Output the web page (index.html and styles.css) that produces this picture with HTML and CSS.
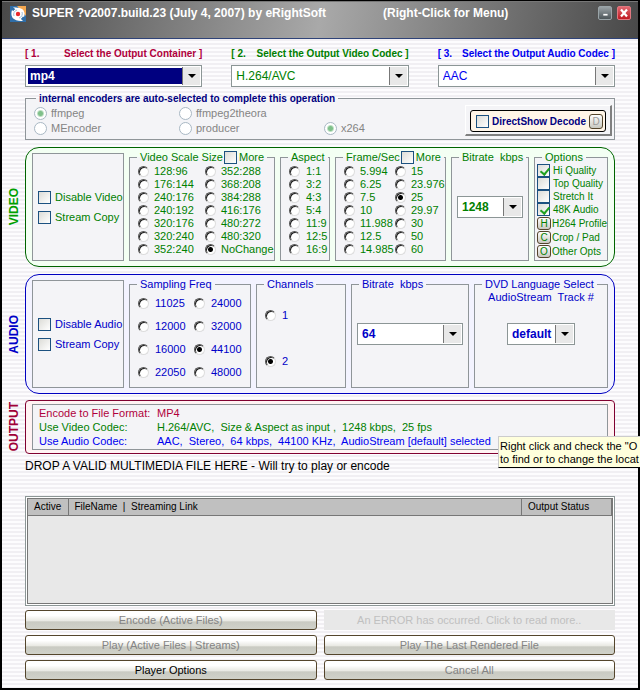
FILE: index.html
```html
<!DOCTYPE html>
<html lang="en">
<head>
<meta charset="utf-8">
<title>SUPER</title>
<link rel="stylesheet" href="styles.css">
</head>
<body>
<div class="window">
  <header class="titlebar">
    <svg class="logo" viewBox="0 0 16 16" aria-hidden="true">
      <rect width="16" height="16" fill="#2f6ea8"/>
      <path d="M7 0h9v10z" fill="#f5a850"/>
      <path d="M3 1C5 2 9 1 12 3c3 2 3 6 2 8l-2-1M13 15c-3 0-6 0-9-2-3-2-3-6-2-9l2 2" fill="#fff"/>
      <circle cx="8" cy="8" r="5.500" fill="#fff"/>
      <path d="M4 10a4.500 4.500 0 0 1 3-6M12 6a4.500 4.500 0 0 1-3 6" fill="none" stroke="#9dbdd8" stroke-width="1"/>
      <circle cx="8" cy="8" r="2.200" fill="#e8292c"/>
    </svg>
    <h1>SUPER ?v2007.build.23 (July 4, 2007) by eRightSoft</h1>
    <span class="hint">(Right-Click for Menu)</span>
    <div class="winbuttons">
      <button class="min" type="button" aria-label="Minimize"><svg viewBox="0 0 14 14"><path d="M5 8h5v2H5z" fill="#fff"/></svg></button>
      <button class="close" type="button" aria-label="Close"><svg viewBox="0 0 14 14"><path d="M3.500 3l7 8M10.500 3l-7 8" stroke="#fff" stroke-width="2.600"/></svg></button>
    </div>
  </header>

  <main>
    <div class="selectors">
      <div class="selector red">
        <label for="container"><span>[ 1.</span><span>Select the Output Container ]</span></label>
        <span class="combo active"><select id="container"><option>mp4</option></select></span>
      </div>
      <div class="selector green">
        <label for="vcodec"><span>[ 2.</span><span>Select the Output Video Codec ]</span></label>
        <span class="combo"><select id="vcodec"><option>H.264/AVC</option></select></span>
      </div>
      <div class="selector blue">
        <label for="acodec"><span>[ 3.</span><span>Select the Output Audio Codec ]</span></label>
        <span class="combo"><select id="acodec"><option>AAC</option></select></span>
      </div>
    </div>

    <fieldset class="panel encoders">
      <legend>internal encoders are auto-selected to complete this operation</legend>
      <div class="encoder-row">
        <div class="encoder-grid">
          <label><input type="radio" name="e1" checked disabled>ffmpeg</label>
          <label><input type="radio" name="e1" disabled>ffmpeg2theora</label>
          <span></span>
          <label><input type="radio" name="e2" disabled>MEncoder</label>
          <label><input type="radio" name="e2" disabled>producer</label>
          <label><input type="radio" name="e2" checked disabled>x264</label>
        </div>
        <div class="directshow">
          <div class="directshow-inner">
            <label><input type="checkbox">DirectShow Decode</label>
            <button class="mini dim" type="button">D</button>
          </div>
        </div>
      </div>
    </fieldset>

    <section class="group video">
      <h2>VIDEO</h2>
      <div class="box">
        <div class="panel plain toggles">
          <label><input type="checkbox">Disable Video</label>
          <label><input type="checkbox">Stream Copy</label>
        </div>
        <fieldset class="panel">
          <legend>Video Scale Size <label><input type="checkbox">More</label></legend>
          <div class="radios scale">
            <label><input type="radio" name="s">128:96</label>
            <label><input type="radio" name="s">176:144</label>
            <label><input type="radio" name="s">240:176</label>
            <label><input type="radio" name="s">240:192</label>
            <label><input type="radio" name="s">320:176</label>
            <label><input type="radio" name="s">320:240</label>
            <label><input type="radio" name="s">352:240</label>
            <label><input type="radio" name="s">352:288</label>
            <label><input type="radio" name="s">368:208</label>
            <label><input type="radio" name="s">384:288</label>
            <label><input type="radio" name="s">416:176</label>
            <label><input type="radio" name="s">480:272</label>
            <label><input type="radio" name="s">480:320</label>
            <label><input type="radio" name="s" checked>NoChange</label>
          </div>
        </fieldset>
        <fieldset class="panel">
          <legend>Aspect</legend>
          <div class="radios">
            <label><input type="radio" name="a">1:1</label>
            <label><input type="radio" name="a">3:2</label>
            <label><input type="radio" name="a">4:3</label>
            <label><input type="radio" name="a">5:4</label>
            <label><input type="radio" name="a">11:9</label>
            <label><input type="radio" name="a">12:5</label>
            <label><input type="radio" name="a">16:9</label>
          </div>
        </fieldset>
        <fieldset class="panel">
          <legend>Frame/Sec <label><input type="checkbox">More</label></legend>
          <div class="radios frames">
            <label><input type="radio" name="f">5.994</label>
            <label><input type="radio" name="f">6.25</label>
            <label><input type="radio" name="f">7.5</label>
            <label><input type="radio" name="f">10</label>
            <label><input type="radio" name="f">11.988</label>
            <label><input type="radio" name="f">12.5</label>
            <label><input type="radio" name="f">14.985</label>
            <label><input type="radio" name="f">15</label>
            <label><input type="radio" name="f">23.976</label>
            <label><input type="radio" name="f" checked>25</label>
            <label><input type="radio" name="f">29.97</label>
            <label><input type="radio" name="f">30</label>
            <label><input type="radio" name="f">50</label>
            <label><input type="radio" name="f">60</label>
          </div>
        </fieldset>
        <fieldset class="panel rate">
          <legend>Bitrate&nbsp; kbps</legend>
          <span class="combo bold"><select aria-label="Video bitrate"><option>1248</option></select></span>
        </fieldset>
        <fieldset class="panel options">
          <legend>Options</legend>
          <label><input type="checkbox" checked>Hi Quality</label>
          <label><input type="checkbox">Top Quality</label>
          <label><input type="checkbox">Stretch It</label>
          <label><input type="checkbox" checked>48K Audio</label>
          <div class="opt"><button class="mini" type="button" aria-labelledby="oh">H</button><span id="oh">H264 Profile</span></div>
          <div class="opt"><button class="mini" type="button" aria-labelledby="oc">C</button><span id="oc">Crop / Pad</span></div>
          <div class="opt"><button class="mini" type="button" aria-labelledby="oo">O</button><span id="oo">Other Opts</span></div>
        </fieldset>
      </div>
    </section>

    <section class="group audio">
      <h2>AUDIO</h2>
      <div class="box">
        <div class="panel plain toggles">
          <label><input type="checkbox">Disable Audio</label>
          <label><input type="checkbox">Stream Copy</label>
        </div>
        <fieldset class="panel">
          <legend>Sampling Freq</legend>
          <div class="radios freq">
            <label><input type="radio" name="q">11025</label>
            <label><input type="radio" name="q">12000</label>
            <label><input type="radio" name="q">16000</label>
            <label><input type="radio" name="q">22050</label>
            <label><input type="radio" name="q">24000</label>
            <label><input type="radio" name="q">32000</label>
            <label><input type="radio" name="q" checked>44100</label>
            <label><input type="radio" name="q">48000</label>
          </div>
        </fieldset>
        <fieldset class="panel">
          <legend>Channels</legend>
          <div class="radios channels">
            <label><input type="radio" name="c">1</label>
            <label><input type="radio" name="c" checked>2</label>
          </div>
        </fieldset>
        <fieldset class="panel rate">
          <legend>Bitrate&nbsp; kbps</legend>
          <span class="combo bold"><select aria-label="Audio bitrate"><option>64</option></select></span>
        </fieldset>
        <fieldset class="panel language">
          <legend>DVD Language Select</legend>
          <label for="track">AudioStream&nbsp; Track #</label>
          <span class="combo bold"><select id="track"><option>default</option></select></span>
        </fieldset>
      </div>
    </section>

    <section class="group output">
      <h2>OUTPUT</h2>
      <div class="box">
        <dl class="panel plain">
          <dt class="red">Encode to File Format:</dt><dd class="red">MP4</dd>
          <dt class="green">Use Video Codec:</dt><dd class="green">H.264/AVC,&nbsp; Size &amp; Aspect as input ,&nbsp; 1248 kbps,&nbsp; 25 fps</dd>
          <dt class="blue">Use Audio Codec:</dt><dd class="blue">AAC,&nbsp; Stereo,&nbsp; 64 kbps,&nbsp; 44100 KHz,&nbsp; AudioStream [default] selected</dd>
        </dl>
      </div>
      <div class="tooltip" role="tooltip">Right click and check the "O<br>to find or to change the locat</div>
    </section>

    <p class="drop">DROP A VALID MULTIMEDIA FILE HERE - Will try to play or encode</p>

    <div class="list">
      <table>
        <thead><tr><th class="c-active">Active</th><th>FileName&nbsp; |&nbsp; Streaming Link</th><th class="c-status">Output Status</th></tr></thead>
      </table>
    </div>

    <div class="actions">
      <button type="button" disabled>Encode (Active Files)</button>
      <button class="error" type="button" disabled>An ERROR has occurred. Click to read more..</button>
      <button type="button" disabled>Play (Active Files | Streams)</button>
      <button type="button" disabled>Play The Last Rendered File</button>
      <button type="button">Player Options</button>
      <button type="button" disabled>Cancel All</button>
    </div>
  </main>
</div>
</body>
</html>
```

FILE: styles.css
```css
* { box-sizing: border-box; }

body {
  margin: 0;
  overflow-x: hidden;
  background: #000;
  font: 11px/13px "Liberation Sans", Arial, sans-serif;
  color: #000;
}

h1, h2, p, dl, dd, fieldset { margin: 0; }
button, select, input { font: inherit; color: inherit; margin: 0; padding: 0; }
label { white-space: nowrap; }

.red { color: #b0003c; }
.green { color: #008000; }
.blue { color: #0000f0; }

.window {
  min-height: 100vh;
  display: flex;
  flex-direction: column;
  border: 2px solid #000;
  border-top-width: 1px;
  background: #fbf9fc repeating-linear-gradient(#fdfcfe 0 2px, #f1eff3 2px 4px);
}

/* Title bar */
.titlebar {
  height: 38px;
  display: flex;
  align-items: flex-start;
  padding: 4px 7px 0 8px;
  border-top: 1px solid #777;
  border-bottom: 1px solid #2f4378;
  background: linear-gradient(100deg, #484848, #a9a9a9 50%, #484848);
  color: #fff;
  font-size: 12px;
  font-weight: bold;
  line-height: 14px;
  white-space: nowrap;
}
.logo { width: 16px; height: 16px; margin-right: 6px; }
.titlebar h1 { font-size: 12px; flex: 0 0 351px; }
.winbuttons { display: flex; gap: 5px; margin-left: auto; }
.winbuttons button {
  width: 14px;
  height: 14px;
  border: 1px solid #9aa4a8;
  border-radius: 2px;
  background: linear-gradient(#9aa2a6, #4d565a);
}
.winbuttons .close { background: linear-gradient(#e06870, #c01820); border-color: #e07880; }
.winbuttons svg { display: block; width: 12px; height: 12px; }

main {
  flex: 1;
  display: flex;
  flex-direction: column;
  padding: 8px 23px 8px 23px;
}

/* Combo boxes */
.combo {
  position: relative;
  display: block;
  height: 22px;
  padding: 2px 18px 2px 2px;
  border: 1px solid #8c9696;
  background: #fff;
}
.combo select {
  appearance: none;
  display: block;
  width: 100%;
  height: 16px;
  border: 0;
  border-radius: 0;
  padding: 0 2px;
  background: #fff;
  font-size: 12px;
  line-height: 16px;
}
.combo::before {
  content: "";
  position: absolute;
  inset: 1px 1px 1px auto;
  width: 17px;
  border-left: 1px solid #777;
  background: #e8e8e8;
}
.combo::after {
  content: "";
  position: absolute;
  top: 8px;
  right: 5px;
  border: 4px solid transparent;
  border-top-color: #000;
  border-bottom-width: 0;
}
.combo.active select { background: #000080; color: #fff; font-weight: bold; }
.combo.bold select { font-size: 12px; font-weight: bold; }

.selectors { display: grid; grid-template-columns: repeat(3, 1fr); gap: 29px; }
.selector > label {
  display: flex;
  justify-content: space-between;
  margin-bottom: 5px;
  font-size: 10px;
  font-weight: bold;
}

/* Check boxes and radios */
input[type="checkbox"] {
  appearance: none;
  flex: none;
  width: 13px;
  height: 13px;
  border: 1px solid #1c5180;
  background: linear-gradient(135deg, #dcdcd7, #fff);
}
input[type="checkbox"]:checked::before {
  content: "";
  display: block;
  width: 4px;
  height: 7px;
  margin: 1px 0 0 4px;
  border: solid #21a121;
  border-width: 0 2px 2px 0;
  transform: rotate(40deg);
}
input[type="radio"] {
  appearance: none;
  flex: none;
  width: 11px;
  height: 11px;
  border: 1px solid;
  border-color: #555 #ddd #ddd #555;
  border-radius: 50%;
  background: #fff;
  box-shadow: inset 1px 1px 0 #222;
}
input[type="radio"]:checked { background: radial-gradient(circle, #000 2px, #fff 3px); }
input[type="radio"]:disabled {
  width: 13px;
  height: 13px;
  border-color: #a9b8c4;
  box-shadow: none;
}
input[type="radio"]:disabled:checked { background: radial-gradient(circle, #7fc08a 2px, #fff 4px); }

/* Panels */
.panel {
  min-width: 0;
  padding: 0;
  border: 1px solid #8f9599;
  background: #f4f4f7;
}
.panel > legend { margin-left: 7px; padding: 0 3px; white-space: nowrap; }
.panel > legend label { display: inline-flex; gap: 2px; height: 13px; margin-left: -2px; vertical-align: top; }

.encoders { margin-top: 5px; color: #848484; }
.encoders > legend { margin-left: 10px; color: #000080; font-size: 10px; font-weight: bold; }
.encoder-row { display: flex; justify-content: space-between; height: 34px; padding: 0 2px 0 8px; }
.encoder-grid { display: grid; grid-template-columns: 145px 145px auto; grid-template-rows: 15px 15px; padding-top: 1px; }
.encoder-grid label { display: flex; align-items: center; gap: 4px; }
.directshow {
  height: 31px;
  padding: 4px;
  border: 1px solid #fff;
  border-right: 2px solid #808080;
  border-bottom: 2px solid #808080;
}
.directshow-inner {
  display: flex;
  align-items: center;
  height: 22px;
  gap: 3px;
  padding: 0 2px 0 5px;
  border: 1px solid #000;
  border-radius: 3px;
  background: #fff5e8;
}
.directshow label { display: flex; align-items: center; gap: 3px; color: #000080; font-size: 10px; font-weight: bold; }

.mini {
  flex: none;
  width: 14px;
  height: 13px;
  border: 1px solid #54452c;
  border-radius: 3px;
  background: linear-gradient(#fff, #c8c8c0);
  font-size: 10px;
  line-height: 11px;
}
.mini.dim { height: 15px; color: #999; }

/* Grouped sections with a vertical caption */
.group { position: relative; display: grid; grid-template-columns: 23px minmax(0, 1fr); margin: 7px 0 0 -23px; }
.group h2 {
  justify-self: center;
  align-self: center;
  writing-mode: vertical-rl;
  transform: rotate(180deg);
  font-size: 12px;
  line-height: 14px;
}
.box { border: 1px solid currentColor; border-radius: 14px; padding: 3px 6px 5px; }
.video .box, .audio .box { display: grid; gap: 5px; height: 120px; }
.video .box { grid-template-columns: 92fr 146fr 50fr 111fr 78fr 74fr; border-color: #006400; background: #f3fff3; }
.audio .box { grid-template-columns: 92fr 122fr 90fr 118fr 134fr; border-color: #0000c0; background: #f3f3ff; }
.video { color: #008000; }
.audio { color: #0000c8; }
.output { margin-top: 6px; color: #a00038; }
.video h2 { color: #00a000; }
.output .box { border-radius: 4px; border-color: #800030; background: #fff3f3; padding: 3px 6px; }

.toggles { display: flex; flex-direction: column; justify-content: center; gap: 7px; margin-top: 2px; padding-left: 5px; }
.toggles label { display: flex; align-items: center; gap: 4px; }

.radios { display: grid; grid-auto-flow: column; grid-template-rows: repeat(7, 13px); justify-content: start; padding: 1px 0 0 8px; }
.radios label { display: flex; align-items: center; gap: 6px; }
.scale label, .frames label { gap: 5px; }
.scale { grid-template-columns: 67px auto; }
.frames { grid-template-columns: 51px auto; }
.freq { grid-template: repeat(4, 23px) / 56px auto; }
.channels { grid-template-rows: 46px 46px; }

.rate .combo { margin: 32px 5px 0; }
.options { font-size: 10px; }
.options > legend { font-size: 11px; }
.options > label, .opt { display: flex; align-items: center; gap: 3px; padding-left: 2px; height: 13px; }
.opt { height: 14px; gap: 1px; white-space: nowrap; }
.language label { display: block; text-align: center; }
.language .combo { width: 68px; margin: 19px auto 0; }

.output dl {
  display: grid;
  grid-template-columns: 118px auto;
  grid-auto-rows: 14px;
  align-items: center;
  padding: 1px 6px;
  white-space: nowrap;
}
.tooltip {
  position: absolute;
  top: 36px;
  left: 496px;
  right: -25px;
  padding: 3px 0 1px 1px;
  border: 1px solid #ccc;
  border-right: 0;
  border-bottom-color: #000;
  background: #ffffdc;
  color: #000;
  white-space: nowrap;
}

.drop { margin: 5px 0 23px; font-size: 12px; line-height: 14px; }

/* File list */
.list {
  flex: 1;
  min-height: 80px;
  padding: 2px;
  border: 1px solid #8c9696;
  background: #e8e8e8;
  box-shadow: inset 0 0 0 1px #fff, inset 0 0 0 2px #777;
}
.list table { width: 100%; height: 16px; border-collapse: collapse; table-layout: fixed; }
.list th {
  height: 16px;
  padding: 0 6px;
  border: solid #777;
  border-width: 0 1px 1px 0;
  background: #c0c0c0;
  font-size: 10px;
  font-weight: normal;
  text-align: left;
}
.c-active { width: 40px; }
.c-status { width: 90px; }

/* Action buttons */
.actions { display: grid; grid-template-columns: 1fr 1fr; gap: 5px 7px; margin: 4px 0 0; }
.actions button {
  height: 20px;
  border: 1px solid #54452c;
  border-radius: 3px;
  background: linear-gradient(#fff 0 25%, #e8e8e2 55%, #c9cac2 60%, #d0d1c9);
}
.actions button:disabled { color: #848484; }
.actions .error { border-color: #e8e8e8; border-radius: 0; background: #e8e8e8; }
.actions .error:disabled { color: #c0c0c0; }
```
